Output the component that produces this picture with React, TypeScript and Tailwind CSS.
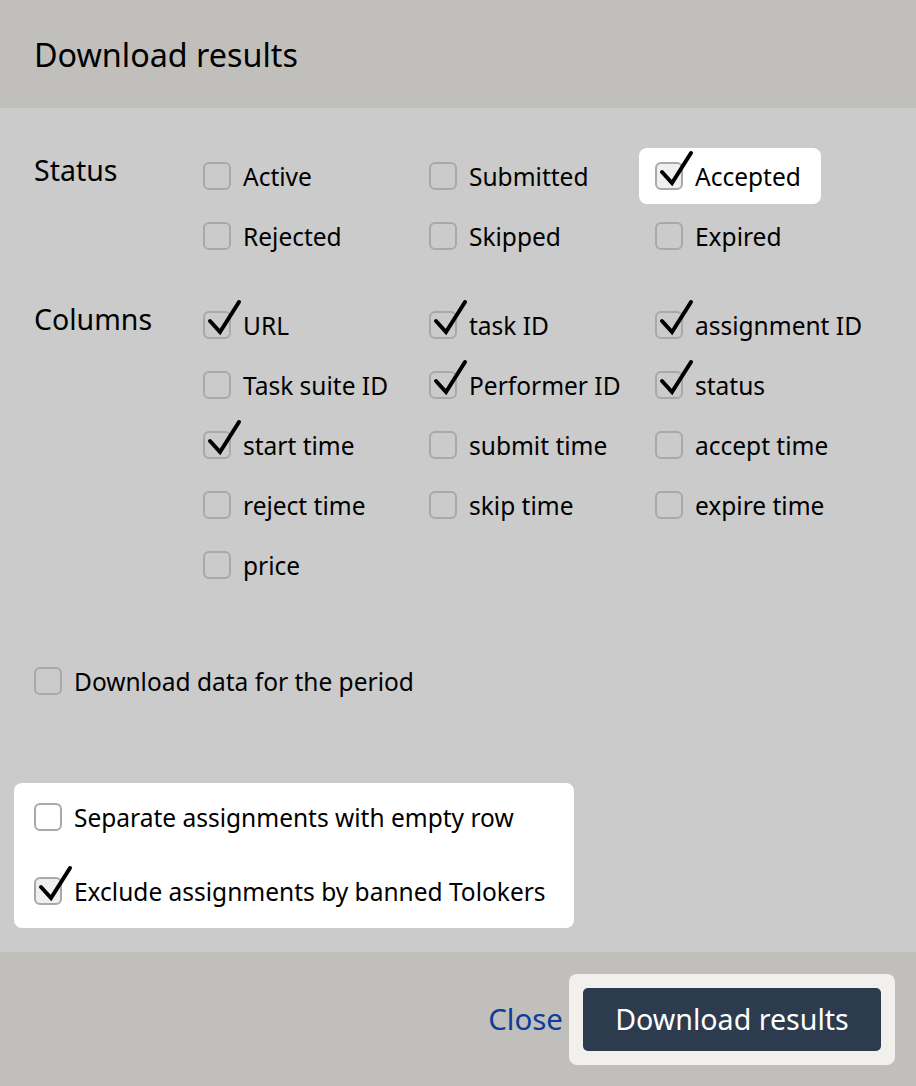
import React from "react";

const Check = () => (
  <svg
    className="absolute left-0 top-[-14px] pointer-events-none"
    width="40"
    height="46"
    viewBox="0 0 40 46"
  >
    <polyline
      points="5,22 15,33 34,3"
      fill="none"
      stroke="#000"
      strokeWidth="4"
      strokeLinecap="round"
      strokeLinejoin="miter"
    />
  </svg>
);

const Box = ({ checked, light }: { checked?: boolean; light?: boolean }) => (
  <span
    className={
      "relative inline-block w-[28px] h-[28px] shrink-0 rounded-[6px] border-2 border-[#a9a9a9] " +
      (light ? (checked ? "bg-[#efefef]" : "bg-white") : "bg-[#cbcbcb]")
    }
  >
    {checked && <Check />}
  </span>
);

const Item = ({
  label,
  checked,
  highlight,
}: {
  label: string;
  checked?: boolean;
  highlight?: boolean;
}) => (
  <div className="h-[56px] flex items-center">
    <div
      className={
        "h-[56px] inline-flex items-center gap-[12px] pl-[16px] pr-[20px] rounded-[8px] " +
        (highlight ? "bg-white" : "")
      }
    >
      <Box checked={checked} light={highlight} />
      <span className="text-[24.5px] leading-none text-black whitespace-nowrap pt-[2px]">{label}</span>
    </div>
  </div>
);

const Section = ({
  title,
  items,
}: {
  title: string;
  items: { label: string; checked?: boolean; highlight?: boolean }[];
}) => (
  <div className="flex">
    <div className="w-[187px] shrink-0 pl-[34px] pt-[5px] text-[28.5px] leading-[34px] text-black">
      {title}
    </div>
    <div className="grid grid-cols-[226px_226px_226px] gap-y-[4px]">
      {items.map((it) => (
        <Item key={it.label} {...it} />
      ))}
    </div>
  </div>
);

export default function App() {
  return (
    <div
      className="w-[916px] h-[1086px] flex flex-col bg-[#cbcbcb] text-black"
      style={{ fontFamily: '"Noto Sans", "Open Sans", sans-serif' }}
    >
      <div className="h-[108px] shrink-0 bg-[#c1bfbb] flex items-center px-[34px]">
        <h1 className="text-[32.3px] leading-none font-normal">Download results</h1>
      </div>

      <div className="flex-1 flex flex-col pt-[40px]">
        <Section
          title="Status"
          items={[
            { label: "Active" },
            { label: "Submitted" },
            { label: "Accepted", checked: true, highlight: true },
            { label: "Rejected" },
            { label: "Skipped" },
            { label: "Expired" },
          ]}
        />
        <div className="h-[33px]" />
        <Section
          title="Columns"
          items={[
            { label: "URL", checked: true },
            { label: "task ID", checked: true },
            { label: "assignment ID", checked: true },
            { label: "Task suite ID" },
            { label: "Performer ID", checked: true },
            { label: "status", checked: true },
            { label: "start time", checked: true },
            { label: "submit time" },
            { label: "accept time" },
            { label: "reject time" },
            { label: "skip time" },
            { label: "expire time" },
            { label: "price" },
          ]}
        />
        <div className="h-[60px]" />
        <div className="h-[56px] flex items-center gap-[12px] pl-[34px]">
          <Box />
          <span className="text-[24.5px] leading-none whitespace-nowrap pt-[2px]">Download data for the period</span>
        </div>
        <div className="h-[74px]" />
        <div className="ml-[14px] self-start bg-white rounded-[8px] pl-[20px] pr-[28px] pt-[6px] pb-[9px] flex flex-col gap-[18px]">
          <div className="h-[56px] flex items-center gap-[12px]">
            <Box light />
            <span className="text-[24.5px] leading-none whitespace-nowrap pt-[2px]">Separate assignments with empty row</span>
          </div>
          <div className="h-[56px] flex items-center gap-[12px]">
            <Box light checked />
            <span className="text-[24.5px] leading-none whitespace-nowrap pt-[2px]">Exclude assignments by banned Tolokers</span>
          </div>
        </div>
      </div>

      <div className="h-[134px] shrink-0 bg-[#c1bfbb] flex items-center justify-end pr-[21px] gap-[6px]">
        <button className="text-[29.5px] leading-none text-[#0b3d9a] bg-transparent">Close</button>
        <div className="bg-[#f2f0ed] rounded-[8px] p-[14px]">
          <button className="w-[298px] h-[63px] rounded-[5px] bg-[#2c3b4e] text-white text-[28.6px] leading-none flex items-center justify-center">
            Download results
          </button>
        </div>
      </div>
    </div>
  );
}
